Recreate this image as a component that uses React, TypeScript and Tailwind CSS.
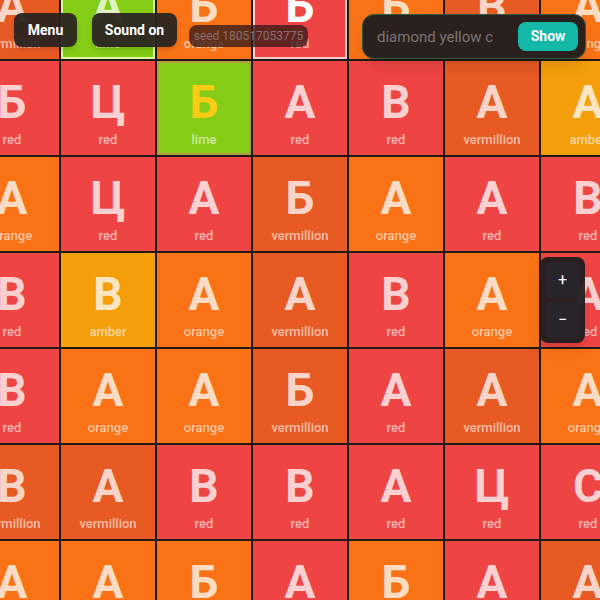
import React from "react";

type Tile = { ch: string; c: "red" | "orange" | "vermillion" | "amber" | "lime"; hl?: "green" | "pink" | "gold" };

const BG: Record<Tile["c"], string> = {
    red: "bg-[#ef4444]",
    orange: "bg-[#f97316]",
    vermillion: "bg-[#e85a23]",
    amber: "bg-[#f59e0b]",
    lime: "bg-[#84cc16]",
};

const t = (ch: string, c: Tile["c"], hl?: Tile["hl"]): Tile => ({ ch, c, hl });

const rows: Tile[][] = [
    [t("А", "vermillion"), t("А", "lime", "green"), t("Б", "orange"), t("Б", "red", "pink"), t("Б", "orange"), t("В", "vermillion"), t("А", "orange")],
    [t("Б", "red"), t("Ц", "red"), t("Б", "lime", "gold"), t("А", "red"), t("В", "red"), t("А", "vermillion"), t("А", "amber")],
    [t("А", "orange"), t("Ц", "red"), t("А", "red"), t("Б", "vermillion"), t("А", "orange"), t("А", "red"), t("В", "red")],
    [t("В", "red"), t("В", "amber"), t("А", "orange"), t("А", "vermillion"), t("В", "red"), t("А", "orange"), t("А", "red")],
    [t("В", "red"), t("А", "orange"), t("А", "orange"), t("Б", "vermillion"), t("А", "red"), t("А", "vermillion"), t("А", "orange")],
    [t("В", "vermillion"), t("А", "vermillion"), t("В", "red"), t("В", "red"), t("А", "red"), t("Ц", "red"), t("С", "red")],
    [t("А", "orange"), t("А", "orange"), t("Б", "orange"), t("А", "red"), t("Б", "orange"), t("А", "red"), t("А", "vermillion")],
];

function Cell({ tile }: { tile: Tile }) {
    const border =
        tile.hl === "green"
            ? "border-2 border-[#d9f99d]"
            : tile.hl === "pink"
            ? "border-2 border-[#fecaca]"
            : tile.hl === "gold"
            ? "border-2 border-[#b49a45]"
            : "";
    const letter =
        tile.hl === "pink" ? "text-white" : tile.hl === "gold" ? "text-[#facc15]" : "text-white/75";
    return (
        <div className={`flex flex-col items-center box-border ${BG[tile.c]} ${border} ${tile.hl ? "pt-[16px]" : "pt-[18px]"}`}>
            <span className={`text-[46px] font-bold leading-none ${letter}`}>{tile.ch}</span>
            <span className="mt-[7px] text-[13px] leading-4 font-medium text-white/60">{tile.c}</span>
        </div>
    );
}

export default function App() {
    return (
        <div
            className="relative w-[600px] h-[600px] overflow-hidden bg-[#1e1a15]"
            style={{ fontFamily: "Roboto, 'Liberation Sans', sans-serif" }}
        >
            <div className="-ml-[35px] -mt-[35px] grid grid-cols-[repeat(7,94px)] grid-rows-[repeat(7,94px)] gap-[2px]">
                {rows.flat().map((tile, i) => (
                    <Cell key={i} tile={tile} />
                ))}
            </div>

            {/* top bar */}
            <div className="absolute left-[14px] top-[13px] flex items-center">
                <button className="h-[34px] w-[63px] rounded-lg bg-[#2a2420]/95 text-[14px] font-bold text-white shadow-md">
                    Menu
                </button>
                <button className="ml-[15px] h-[34px] w-[85px] rounded-lg bg-[#2a2420]/95 text-[14px] font-bold text-white shadow-md">
                    Sound on
                </button>
                <span className="ml-[12px] mt-[11px] flex h-[22px] w-[119px] items-center justify-center rounded-lg bg-[#3a1c1a]/80 text-[12px] text-[#87706b]">
                    seed 180517053775
                </span>
            </div>

            {/* search */}
            <div className="absolute left-[362px] top-[14px] flex h-[45px] w-[224px] items-center rounded-xl border border-[#2f5c44] bg-[#2a211f] pl-[14px] pr-[7px] shadow-lg">
                <span className="mt-[2px] flex-1 overflow-hidden whitespace-nowrap text-[15px] text-[#7d7571]">diamond yellow c</span>
                <button className="h-[29px] w-[60px] rounded-lg bg-[#14b8a6] text-[14px] font-bold text-white">Show</button>
            </div>

            {/* zoom */}
            <div className="absolute left-[540px] top-[257px] flex w-[45px] flex-col gap-[4px] rounded-lg bg-[#1f1c20]/95 p-[5px] shadow-lg">
                <button className="flex h-[36px] items-center justify-center rounded-md bg-[#27252a] text-[16px] text-white">+</button>
                <button className="flex h-[36px] items-center justify-center rounded-md bg-[#27252a] text-[16px] text-white">−</button>
            </div>
        </div>
    );
}
